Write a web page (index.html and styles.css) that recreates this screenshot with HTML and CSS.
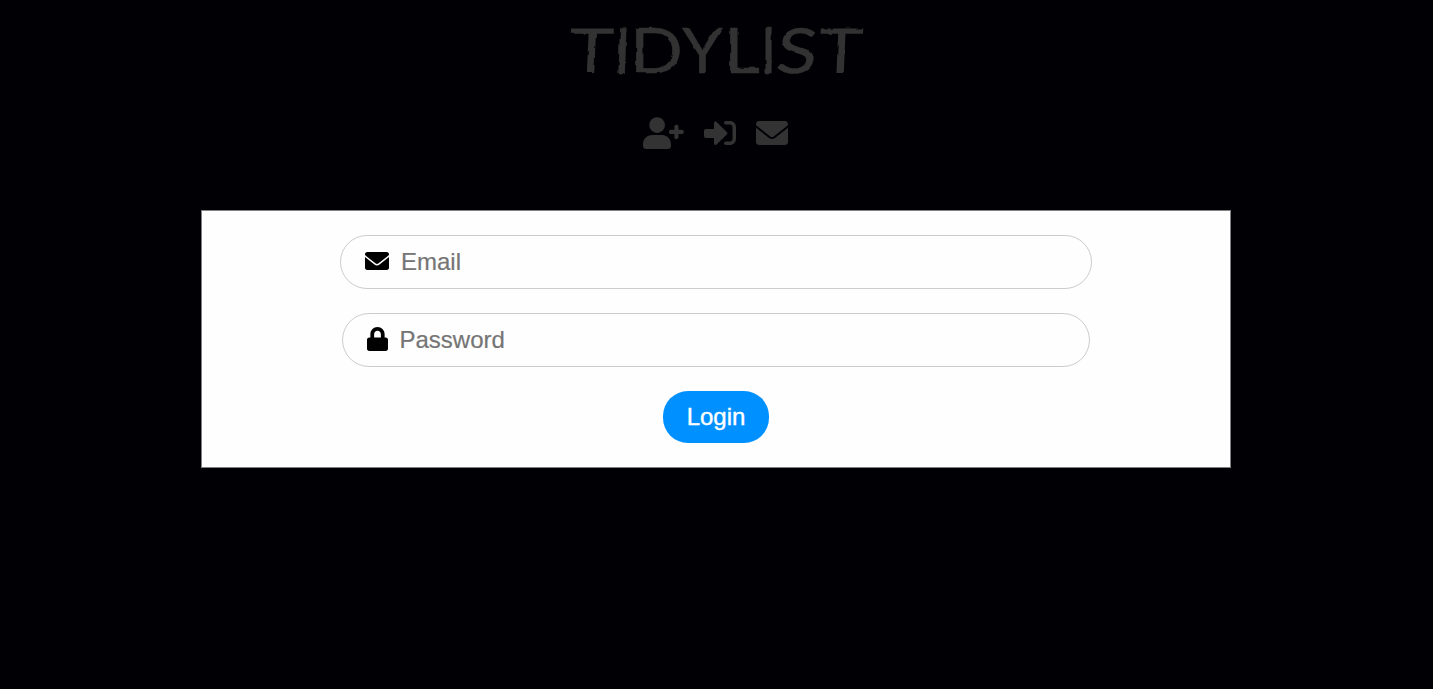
FILE: index.html
```html
<!DOCTYPE html>
<html lang="en">
<head>
<meta charset="utf-8">
<title>Tidylist</title>
<link rel="stylesheet" href="styles.css">
</head>
<body>
<svg class="defs" width="0" height="0" aria-hidden="true">
  <filter id="rough" x="-5%" y="-10%" width="110%" height="120%">
    <feTurbulence type="fractalNoise" baseFrequency="0.09" numOctaves="2" seed="4" result="n"/>
    <feDisplacementMap in="SourceGraphic" in2="n" scale="2.8" xChannelSelector="R" yChannelSelector="G"/>
  </filter>
</svg>
<header class="header">
  <h1 class="title" aria-label="TIDYLIST"><span class="t">T</span><span class="i">I</span><span class="d">D</span><span class="y">Y</span><span class="l">L</span><span class="i2">I</span><span class="s">S</span><span class="t2">T</span></h1>
  <nav class="nav">
    <svg class="icon-user" viewBox="0 0 656 512"><circle cx="226" cy="128" r="126"/><path d="M146 288H302C383 288 448 353 448 434V464C448 491 427 512 400 512H48C21 512 0 491 0 464V434C0 353 65 288 146 288ZM533 124C553 124 568 135 568 152V205H622C640 205 653 220 653 238S640 271 622 271H568V324C568 341 553 352 533 352S502 341 502 324V271H446C428 271 415 256 415 238S428 205 446 205H502V152C502 135 513 124 533 124Z"/></svg>
    <svg class="icon" viewBox="0 0 512 512"><path d="M201 79L365 239C377 251 377 269 365 281L201 441C185 457 160 446 160 424V336H32C14 336 0 322 0 304V224C0 206 14 192 32 192H160V96C160 74 185 63 201 79ZM352 64H416C469 64 512 107 512 160V352C512 405 469 448 416 448H352C334 448 320 436 320 420S334 392 352 392H416C438 392 456 374 456 352V160C456 138 438 120 416 120H352C334 120 320 108 320 92S334 64 352 64Z"/></svg>
    <svg class="icon" viewBox="0 0 512 512"><path d="M256 352c-16.5 0-33.1-5.4-47.2-16.4L0 173.2V400C0 426.5 21.5 448 48 448h416c26.5 0 48-21.5 48-48V173.2L303.2 335.7C289.1 346.6 272.5 352 256 352zM16.3 145.3l212.2 165.1c16.2 12.6 38.9 12.6 55.1 0l212.2-165.1C505.1 137.3 512 125 512 112C512 85.5 490.5 64 464 64H48C21.5 64 0 85.5 0 112C0 125 6 137.3 16.3 145.3z"/></svg>
  </nav>
</header>
<main class="panel">
  <label class="field email">
    <svg class="field-icon" viewBox="0 0 512 512"><path d="M256 352c-16.5 0-33.1-5.4-47.2-16.4L0 173.2V400C0 426.5 21.5 448 48 448h416c26.5 0 48-21.5 48-48V173.2L303.2 335.7C289.1 346.6 272.5 352 256 352zM16.3 145.3l212.2 165.1c16.2 12.6 38.9 12.6 55.1 0l212.2-165.1C505.1 137.3 512 125 512 112C512 85.5 490.5 64 464 64H48C21.5 64 0 85.5 0 112C0 125 6 137.3 16.3 145.3z"/></svg>
    <input type="email" placeholder="Email">
  </label>
  <label class="field password">
    <svg class="field-icon lock" viewBox="0 0 448 512"><path d="M400 224h-24v-72C376 68.2 307.8 0 224 0S72 68.2 72 152v72H48c-26.5 0-48 21.5-48 48v192c0 26.5 21.5 48 48 48h352c26.5 0 48-21.5 48-48V272c0-26.5-21.5-48-48-48zm-104 0H152v-72c0-39.7 32.3-72 72-72s72 32.3 72 72v72z"/></svg>
    <input type="password" placeholder="Password">
  </label>
  <button class="login" type="button">Login</button>
</main>
</body>
</html>
```

FILE: styles.css
```css
* { box-sizing: border-box; }
body {
  margin: 0;
  min-height: 100vh;
  background: #000005;
  font-family: "Liberation Sans", Arial, sans-serif;
  display: flex;
  flex-direction: column;
  align-items: center;
}
.defs { position: absolute; }
.header {
  width: 100%;
  height: 210px;
  padding-right: 2px;
  display: flex;
  flex-direction: column;
  align-items: center;
  color: #333;
}
.title {
  margin: 12px 0 0;
  height: 74px;
  display: flex;
  width: 294px;
  font: 400 62px/74px Lato, sans-serif;
  filter: url(#rough);
  -webkit-text-stroke: 0.5px #333;
}
.title span {
  display: flex;
  justify-content: center;
  flex: none;
}
.title .t { width: 45px; transform: scaleX(1.23) skewX(-2deg); -webkit-text-stroke: 0; }
.title .i { width: 17px; transform: skewX(-2deg); }
.title .d { width: 51px; transform: scaleX(1.12); }
.title .y { width: 41px; transform: scaleX(1.04); }
.title .l { width: 38px; transform: scaleX(1.13); }
.title .i2 { width: 15px; transform: scaleX(0.9); }
.title .s { width: 43px; transform: scaleX(1.2) skewX(-5deg); }
.title .t2 { width: 44px; transform: scaleX(1.22) skewX(-2deg); -webkit-text-stroke: 0; }
.nav {
  margin-top: 31px;
  display: flex;
  gap: 20px;
  fill: #333;
}
.icon-user { width: 41px; height: 32px; }
.icon { width: 32px; height: 32px; }
.panel {
  width: 1030px;
  height: 258px;
  margin-right: 1px;
  padding-top: 24px;
  background: #fefefe;
  border: 1px solid #808084;
  display: flex;
  flex-direction: column;
  align-items: center;
  gap: 24px;
}
.field {
  height: 54px;
  padding: 0 24px;
  border: 1px solid #ccc;
  border-radius: 27px;
  display: flex;
  align-items: center;
  gap: 12px;
}
.email { width: 752px; }
.password { width: 748px; padding-left: 23.5px; }
.field-icon { width: 24px; height: 24px; flex: none; margin-top: -2px; }
.lock { width: 21px; }
.field input {
  flex: 1;
  border: 0;
  padding: 0;
  outline: 0;
  background: none;
  font: 24px "Liberation Sans", Arial, sans-serif;
}
.field input::placeholder { color: #757575; -webkit-text-stroke: 0.2px #757575; }
.login {
  width: 106px;
  height: 52px;
  padding: 0;
  border: 0;
  border-radius: 25px;
  background: #0090ff;
  color: #fff;
  font: 24px "Liberation Sans", Arial, sans-serif;
  -webkit-text-stroke: 0.4px #fff;
}
```
